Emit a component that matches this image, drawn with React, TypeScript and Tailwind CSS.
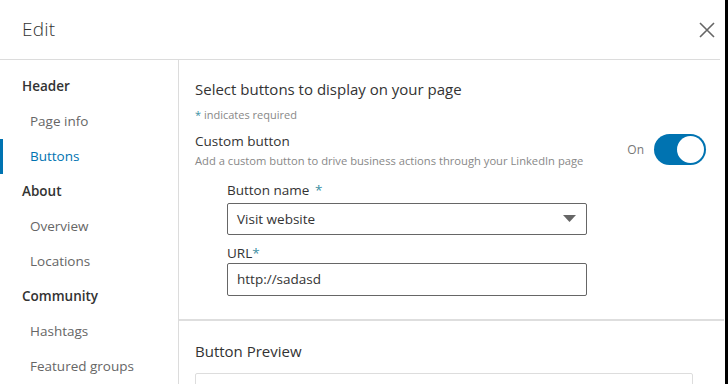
import React from 'react';

const nav = [
  { label: 'Header', level: 0 },
  { label: 'Page info', level: 1 },
  { label: 'Buttons', level: 1, active: true },
  { label: 'About', level: 0 },
  { label: 'Overview', level: 1 },
  { label: 'Locations', level: 1 },
  { label: 'Community', level: 0 },
  { label: 'Hashtags', level: 1 },
  { label: 'Featured groups', level: 1 },
];

export default function App() {
  return (
    <div
      className="w-[728px] h-[384px] flex bg-white overflow-hidden text-[#333]"
      style={{ fontFamily: '"Open Sans", "Noto Sans", sans-serif' }}
    >
      <div className="flex-1 flex flex-col min-w-0">
        {/* Header */}
        <div className="h-[60px] shrink-0 mr-[5px] border-b border-[#dcdcdc] flex items-center justify-between pl-[22px] pr-[4px]">
          <h1 className="text-[19px] font-light text-[#333] tracking-[0.2px]">Edit</h1>
          <svg width="18" height="18" viewBox="0 0 18 18" className="text-[#666]">
            <path d="M2 2 L16 16 M16 2 L2 16" stroke="currentColor" strokeWidth="1.6" fill="none" />
          </svg>
        </div>

        <div className="flex flex-1 min-h-0">
          {/* Sidebar */}
          <nav className="w-[179px] shrink-0 border-r border-[#dcdcdc] pt-[9px]">
            {nav.map((item) => (
              <div
                key={item.label}
                className={`relative h-[35px] flex items-center text-[13.5px] ${
                  item.level === 0 ? 'pl-[22px] font-semibold text-[#333]' : 'pl-[30px]'
                } ${item.active ? 'text-[#0073b1]' : item.level === 1 ? 'text-[#666]' : ''}`}
              >
                {item.active && <span className="absolute left-0 top-0 bottom-0 w-[3px] bg-[#0073b1]" />}
                {item.label}
              </div>
            ))}
          </nav>

          {/* Content */}
          <div className="flex-1 flex flex-col min-w-0 mr-[1px]">
            <section className="h-[261px] shrink-0 border-b-2 border-[#dedede] pl-[16px] pr-[16px] pt-[18px]">
              <h2 className="text-[15px] leading-[22px] text-[#333]">Select buttons to display on your page</h2>
              <p className="mt-[7px] text-[11px] leading-[16px] text-[#888]">
                <span className="text-[#3c8fa3]">*</span> indicates required
              </p>
              <div className="flex items-start justify-between mt-[8px]">
                <div>
                  <p className="text-[13.5px] leading-[20px] text-[#333]">Custom button</p>
                  <p className="mt-[1px] text-[11.2px] leading-[18px] text-[#888]">
                    Add a custom button to drive business actions through your LinkedIn page
                  </p>
                </div>
                <div className="flex items-center gap-[10px] mt-[3px] mr-[2px]">
                  <span className="text-[12px] text-[#777]">On</span>
                  <div className="w-[52px] h-[31px] rounded-full bg-[#0073b1] flex items-center justify-end pr-[2px]">
                    <div className="w-[27px] h-[27px] rounded-full bg-white" />
                  </div>
                </div>
              </div>

              <div className="ml-[32px] w-[360px] mt-[10px]">
                <label className="block text-[13.5px] leading-[20px] text-[#333]">
                  Button name <span className="text-[#3c8fa3] ml-[2px]">*</span>
                </label>
                <div className="mt-[3px] h-[32px] border border-[#666] rounded-[2px] flex items-center justify-between pl-[9px] pr-[10px]">
                  <span className="text-[13.5px] text-[#333]">Visit website</span>
                  <svg width="13" height="8" viewBox="0 0 13 8">
                    <path d="M0 0 H13 L6.5 7 Z" fill="#666" />
                  </svg>
                </div>
                <label className="block mt-[8px] text-[13.5px] leading-[20px] text-[#333]">
                  URL<span className="text-[#3c8fa3]">*</span>
                </label>
                <div className="mt-0 h-[33px] border border-[#666] rounded-[2px] flex items-center pl-[9px]">
                  <span className="text-[13.5px] text-[#333]">http://sadasd</span>
                </div>
              </div>
            </section>

            <section className="flex-1 pl-[16px] pt-[19px]">
              <h2 className="text-[15px] leading-[22px] text-[#333]">Button Preview</h2>
              <div className="mt-[11px] mr-[31px] h-[40px] border border-[#ddd] rounded-[2px]" />
            </section>
          </div>
        </div>
      </div>
      <div className="w-[3px] shrink-0 bg-black" />
    </div>
  );
}
